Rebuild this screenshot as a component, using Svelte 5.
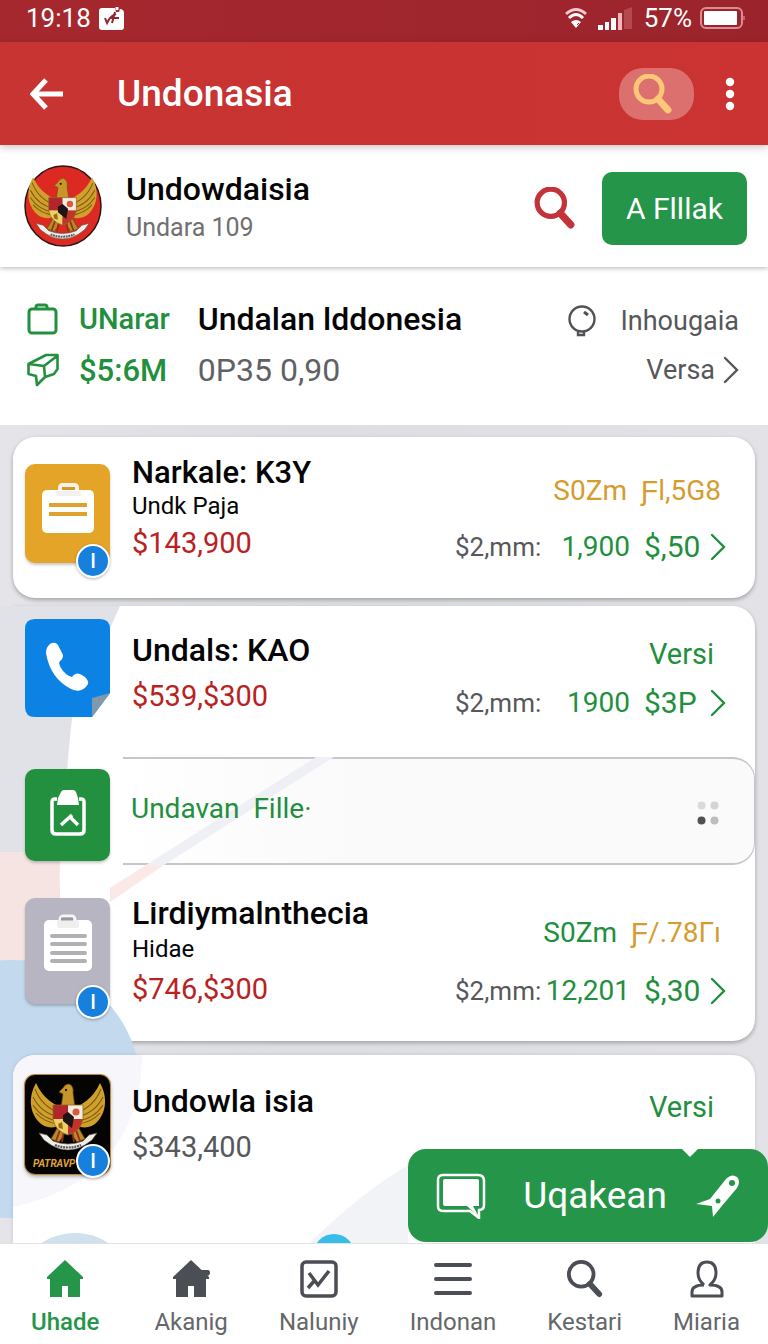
<script>
  const rows = [
    { kind: 'first', icon: 'case', badge: true, title: 'Narkale: K3Y', sub: 'Undk Paja', price: '$143,900', tone: 'red',
      top: [{ text: 'S0Zm', tone: 'gold' }, { text: 'Ƒl,5G8', tone: 'gold' }], count: '1,900', amount: '$,50' },
    { kind: 'call', icon: 'phone', title: 'Undals: KAO', price: '$539,$300', tone: 'red',
      top: [{ text: 'Versi', tone: 'green' }], count: '1900', amount: '$3P' },
    { kind: 'tall', icon: 'notes', badge: true, title: 'Lirdiymalnthecia', sub: 'Hidae', price: '$746,$300', tone: 'red',
      top: [{ text: 'S0Zm', tone: 'green' }, { text: 'Ƒ/.78Γı', tone: 'gold' }], count: '12,201', amount: '$,30' },
    { kind: 'last', icon: 'crest', badge: true, title: 'Undowla isia', price: '$343,400', tone: 'grey',
      top: [{ text: 'Versi', tone: 'green' }] }
  ];
  const tabs = [
    { id: 'home', label: 'Uhade' },
    { id: 'house', label: 'Akanig' },
    { id: 'chart', label: 'Naluniy' },
    { id: 'menu', label: 'Indonan' },
    { id: 'search', label: 'Kestari' },
    { id: 'person', label: 'Miaria' }
  ];
  let active = $state('home');
</script>

{#snippet lens(size, color, width)}
  <svg width={size} height={size} viewBox="0 0 40 40" fill="none" stroke={color} stroke-width={width} aria-hidden="true">
    <circle cx="16" cy="15" r="13" />
    <path d="M25 25 L35 36" stroke-width={width + 2} stroke-linecap="round" />
  </svg>
{/snippet}

{#snippet chevron()}
  <svg class="chev" width="16" height="28" viewBox="0 0 16 28" fill="none" stroke="currentColor" stroke-width="2.400" stroke-linecap="round" aria-hidden="true">
    <path d="M2 2 L14 14 L2 26" />
  </svg>
{/snippet}

{#snippet garuda()}
  <g>
    <path d="M39 34 C30 30 18 24 11 8 C3 22 5 37 13 46 C20 54 30 54 36 49 Z" fill="#d0a02c" />
    <path d="M47 34 C56 30 68 24 75 8 C83 22 81 37 73 46 C66 54 56 54 50 49 Z" fill="#d0a02c" />
    <path d="M10 14 Q17 32 35 38 M8 22 Q16 38 34 42 M8 30 Q17 44 34 46 M11 38 Q20 48 34 49 M76 14 Q69 32 51 38 M78 22 Q70 38 52 42 M78 30 Q69 44 52 46 M75 38 Q66 48 52 49" fill="none" stroke="#7c5a12" stroke-width="1.100" />
    <path d="M36 33 L38 19 L34 17 L38 13 Q40 9 44 9 Q49 11 48 18 L50 33 Z" fill="#c7952a" stroke="#6f4f10" stroke-width=".7" />
    <circle cx="41" cy="15" r="1.200" fill="#2a1c05" />
    <path d="M34 50 L26 64 L34 67 L43 54 L52 67 L60 64 L52 50 Z" fill="#b98a25" stroke="#6f4f10" stroke-width=".8" />
    <path d="M35 55 L31 66 M39 55 L37 67 M47 55 L49 67 M51 55 L55 66" stroke="#9b2a22" stroke-width="1.800" />
    <path d="M28 30 H43 V44 H28 Z" fill="#b3242b" />
    <path d="M43 30 H58 V44 H43 Z" fill="#f4ece2" />
    <path d="M28 44 H43 V60 Q30 56 28 44 Z" fill="#ecd069" />
    <path d="M43 44 H58 Q56 56 43 60 Z" fill="#c2342b" />
    <path d="M38 40 L43 37 L49 42 L47 53 L43 50 L38 46 Z" fill="#1f1413" />
    <circle cx="51" cy="37" r="3.500" fill="#d95a3a" />
    <path d="M33 49 L37 47 L38 54 L34 53 Z" fill="#9a6b12" />
    <path d="M28 30 H58 V44 Q56 56 43 60 Q30 56 28 44 Z" fill="none" stroke="#8c6a1c" stroke-width=".8" />
    <path d="M14 58 L22 60 L28 66 Q43 72 58 66 L64 60 L72 58 L67 65 L60 70 Q43 80 26 70 L19 65 Z" fill="#efefea" stroke="#5c5145" stroke-width=".7" />
    <path d="M30 70 Q43 75 56 70" fill="none" stroke="#555" stroke-width="2.200" stroke-dasharray="2 .8" />
  </g>
{/snippet}

{#snippet row(r)}
  <article class="row {r.kind}">
    <div class="thumb {r.icon}">
      {#if r.icon === 'case'}
        <svg width="52" height="52" viewBox="0 0 52 52" aria-hidden="true">
          <path d="M18 9 V6 Q18 3 21 3 H32 Q35 3 35 6 V9" fill="none" stroke="#f5f2ec" stroke-width="4" />
          <rect x="0" y="8" width="52" height="43" rx="5" fill="#fff" />
          <path d="M14 9 H39 V12 Q39 14 36 14 H17 Q14 14 14 12 Z" fill="#f3f1ee" />
          <path d="M20 5 H33 V8 H20 Z" fill="#d39a2b" />
          <path d="M7 23 H45 M7 32 H45" stroke="#e0a22e" stroke-width="4" />
        </svg>
      {:else if r.icon === 'phone'}
        <svg width="85" height="98" viewBox="0 0 85 98" aria-hidden="true">
          <path d="M10 0 H75 Q85 0 85 10 V74 L67 98 H10 Q0 98 0 88 V10 Q0 0 10 0 Z" fill="#0b82e4" />
          <path d="M85 74 L67 79 V98 Z" fill="#7f98ab" />
          <path d="M25 25 Q30 22 33 26 L38 36 Q38 40 35 42 Q33 44 36 49 Q40 56 47 58 Q51 52 57 56 Q64 60 63 65 Q57 75 46 70 Q25 59 21 34 Q21 28 25 25 Z" fill="#fff" />
        </svg>
      {:else if r.icon === 'notes'}
        <svg width="50" height="58" viewBox="0 0 50 58" aria-hidden="true">
          <path d="M17 10 V6 Q17 2 21 2 H28 Q32 2 32 6 V10" fill="none" stroke="#f6f6f7" stroke-width="3" />
          <rect x="1" y="6" width="48" height="51" rx="5" fill="#fff" />
          <rect x="14" y="6" width="22" height="8" rx="2" fill="#efeff0" />
          <path d="M18 5 H30" stroke="#98989c" stroke-width="3" />
          <path d="M9 22 H42 M9 30 H42 M9 39 H42 M9 47 H42" stroke="#b1b0b4" stroke-width="4" stroke-linecap="round" />
        </svg>
      {:else}
        <svg width="86" height="99" viewBox="0 0 86 99" aria-hidden="true">
          {@render garuda()}
        </svg>
        <span class="crest-name">PATRAVP</span>
      {/if}
      {#if r.badge}<span class="badge">I</span>{/if}
    </div>
    <div class="info">
      <h2>{r.title}</h2>
      {#if r.sub}<p class="sub">{r.sub}</p>{/if}
      <p class="price {r.tone}">{r.price}</p>
    </div>
    <div class="stats">
      <p class="top">
        {#each r.top as part}<span class={part.tone}>{part.text}</span>{/each}
      </p>
      {#if r.count}
        <a class="figures" href="#details">
          <span class="unit">$2,mm:</span>
          <span class="count">{r.count}</span>
          <span class="amount">{r.amount}</span>
          {@render chevron()}
        </a>
      {/if}
    </div>
  </article>
{/snippet}

<div class="page">
  <div class="status">
    <span>19:18</span>
    <svg width="25" height="25" viewBox="0 0 25 25" aria-hidden="true">
      <path d="M3 2 H16 L17 6 H20 L21 3 H22 Q25 4 25 7 V21 Q25 24 22 24 H3 Q0 24 0 21 V5 Q0 2 3 2 Z" fill="#fff" />
      <path d="M18 1 V4" stroke="#fff" stroke-width="3" />
      <path d="M6 12 L8 17 Q11 10 17 8 M16 6 L13 17 M12 12 H20" fill="none" stroke="#8f2830" stroke-width="2" />
    </svg>
    <span class="space"></span>
    <svg width="24" height="22" viewBox="0 0 24 22" fill="none" aria-hidden="true">
      <path d="M2 7 Q12 -2 22 7" stroke="#f1c9cc" stroke-width="3" />
      <path d="M5 11 Q12 4 19 11" stroke="#fff" stroke-width="3" />
      <path d="M7 15 Q12 11 17 15 L12 21 Z" fill="#fff" />
      <path d="M13 18 L15 16" stroke="#9d262e" />
    </svg>
    <svg class="signal" width="34" height="23" viewBox="0 0 34 23" aria-hidden="true">
      <path d="M0 18 H5 V23 H0 Z M7 15 H11 V23 H7 Z M13 11 H18 V23 H13 Z" fill="#fff" />
      <path d="M20 6 H24 V23 H20 Z" fill="#f0b9bd" />
      <path d="M26 3 L34 0 V22 H26 Z" fill="#b4484f" />
    </svg>
    <span class="percent">57%</span>
    <svg class="battery" width="46" height="22" viewBox="0 0 46 22" aria-hidden="true">
      <rect x="1" y="1" width="41" height="20" rx="5" fill="none" stroke="#d98c91" stroke-width="2" />
      <rect x="4" y="4" width="33" height="14" rx="1" fill="#fff" />
      <path d="M44 9 V13" stroke="#c4646a" stroke-width="2" />
    </svg>
  </div>

  <header class="appbar">
    <button class="plain" aria-label="Back">
      <svg width="34" height="32" viewBox="0 0 34 32" fill="none" stroke="#fff" stroke-width="5" aria-hidden="true">
        <path d="M16 2 L3 16 L16 30 M3 16 H33" />
      </svg>
    </button>
    <h1>Undonasia</h1>
    <button class="pill" aria-label="Search">{@render lens(40, '#fcc776', 5)}</button>
    <button class="plain" aria-label="More">
      <svg width="10" height="34" viewBox="0 0 10 34" fill="#fff" aria-hidden="true">
        <circle cx="5" cy="5" r="4.200" /><circle cx="5" cy="17" r="4.200" /><circle cx="5" cy="29" r="4.200" />
      </svg>
    </button>
  </header>

  <section class="profile">
    <svg width="78" height="82" viewBox="0 0 78 82" aria-hidden="true">
      <ellipse cx="39" cy="41" rx="38" ry="40" fill="#dc2a22" stroke="#2b1512" stroke-width="1.500" />
      <g transform="translate(-1 5) scale(.92)">{@render garuda()}</g>
    </svg>
    <div class="who">
      <h2>Undowdaisia</h2>
      <p>Undara 109</p>
    </div>
    <button class="plain" aria-label="Find">{@render lens(42, '#c3333a', 5)}</button>
    <button class="cta">A Flllak</button>
  </section>

  <section class="summary">
    <svg width="32" height="32" viewBox="0 0 32 32" fill="none" stroke="#23903f" stroke-width="3" aria-hidden="true">
      <rect x="2" y="6" width="27" height="24" rx="3" />
      <path d="M9 6 V4 Q9 2 11 2 H18 Q20 2 20 4 V6" />
    </svg>
    <strong class="green">UNarar</strong>
    <h2>Undalan lddonesia</h2>
    <p class="hint">
      <svg width="28" height="34" viewBox="0 0 28 34" fill="none" stroke="#505255" stroke-width="2.400" aria-hidden="true">
        <circle cx="14" cy="15" r="12.500" />
        <path d="M10 28 V31 H16 V28" />
        <path d="M16 8 L20 11" stroke-width="3" />
      </svg>
      Inhougaia
    </p>
    <svg width="32" height="34" viewBox="0 0 32 34" fill="none" stroke="#23903f" stroke-width="2.600" stroke-linejoin="round" aria-hidden="true">
      <path d="M1.500 11 L19 2 H30.500 V16 L27 21 L18 24 L10 32 L9 23 L1.500 21 Z M1.500 11 L17 13 L30 3 M17 13 L18 24" />
    </svg>
    <strong class="green big">$5:6M</strong>
    <p class="code">0P35 0,90</p>
    <a class="hint link" href="#versa">Versa {@render chevron()}</a>
  </section>

  <main>
    <section class="card">{@render row(rows[0])}</section>

    <section class="group">
      <svg class="backdrop" width="142" height="638" viewBox="0 0 142 638" aria-hidden="true">
        <path d="M0 0 H120 Q94 58 73 105 Q66 160 62 246 H0 Z" fill="#e1e2e7" />
        <path d="M0 246 H60 Q58 300 66 360 H0 Z" fill="#f6e4e2" />
        <circle cx="12" cy="483" r="129" fill="#c3d9ee" />
      </svg>
      <div class="upper">{@render row(rows[1])}</div>
      <div class="filler">
        <svg class="stripe" width="250" height="160" viewBox="0 0 250 160" aria-hidden="true">
          <path d="M206 0 H224 L54 108 H36 Z" fill="#efeff6" />
          <path d="M36 108 H54 L0 145 V131 Z" fill="#fae9e7" />
        </svg>
        <div class="thumb clip">
          <svg width="36" height="46" viewBox="0 0 36 46" fill="none" stroke="#fff" stroke-width="3.500" aria-hidden="true">
            <path d="M7 9 H5 Q2 9 2 12 V40 Q2 44 6 44 H30 Q34 44 34 40 V12 Q34 9 31 9 H29" />
            <path d="M7 15 L8 8 L11 2 Q12 0 14 0 H23 Q25 0 26 2 L28 8 L29 15 Z" fill="#fff" stroke="none" />
            <path d="M11 35 L22 25 M20 27 L28 35" />
          </svg>
        </div>
        <a class="green" href="#filler">Undavan&nbsp; Fille·</a>
        <svg width="22" height="24" viewBox="0 0 22 24" aria-hidden="true">
          <circle cx="4.500" cy="4.500" r="4" fill="#dadada" /><circle cx="17.500" cy="4.500" r="4" fill="#d4d4d4" />
          <circle cx="4.500" cy="19.500" r="4" fill="#505050" /><circle cx="17.500" cy="19.500" r="4" fill="#bdbdbd" />
        </svg>
      </div>
      <div class="lower">{@render row(rows[2])}</div>
    </section>

    <section class="card open">
      <svg class="tint" width="395" height="188" viewBox="0 0 395 188" aria-hidden="true">
        <path d="M0 0 H129 Q130 60 90 108 Q55 140 0 152 Z" fill="#f7f7fb" />
        <path d="M297 188 Q345 140 395 110 V188 Z" fill="#f2f3f7" />
        <circle cx="62" cy="238" r="60" fill="#cfe0ee" />
        <circle cx="321" cy="200" r="21" fill="#38bde6" />
      </svg>
      {@render row(rows[3])}
    </section>

    <button class="fab">
      <svg width="50" height="46" viewBox="0 0 50 46" aria-hidden="true">
        <path d="M7 2 H42 Q48 2 48 8 V32 Q48 37 43 37 V45 L34 38 H7 Q2 38 2 33 V7 Q2 2 7 2 Z" fill="none" stroke="#fff" stroke-width="2.500" />
        <path d="M9 6 H41 Q43 6 43 8 V33 H37 L43 44 L31 33 H9 Q7 33 7 31 V8 Q7 6 9 6 Z" fill="#fff" />
      </svg>
      <span>Uqakean</span>
      <svg width="44" height="42" viewBox="0 0 44 42" aria-hidden="true">
        <path d="M0 29 L14 24 L30 4 Q36 -2 41 2 Q45 6 41 13 L25 32 L17 42 L16 31 Z" fill="#fff" />
        <circle cx="36" cy="8" r="3" fill="#259549" /><circle cx="22" cy="26" r="2.500" fill="#259549" />
      </svg>
    </button>
  </main>

  <nav>
    {#each tabs as tab}
      <button class:active={active === tab.id} onclick={() => (active = tab.id)}>
        {#if tab.id === 'home' || tab.id === 'house'}
          <svg width="38" height="38" viewBox="0 0 38 38" fill="currentColor" aria-hidden="true">
            <path d="M19 0 L37 17 V19 H34 V37 H22 V26 H16 V37 H4 V19 H1 V17 Z" />
            {#if tab.id === 'house'}<path d="M29 10 H36 Q38 10 38 13 Q38 16 34 16 V20 Z" />{/if}
          </svg>
        {:else if tab.id === 'chart'}
          <svg width="38" height="38" viewBox="0 0 38 38" fill="none" stroke="currentColor" stroke-width="3.500" aria-hidden="true">
            <rect x="2" y="2" width="34" height="34" rx="4" />
            <path d="M9 13 L18 25 L29 11 M8 28 L15 20" />
          </svg>
        {:else if tab.id === 'menu'}
          <svg width="40" height="38" viewBox="0 0 40 38" fill="none" stroke="currentColor" stroke-width="4" stroke-linecap="round" aria-hidden="true">
            <path d="M3 5 H37 M3 19 H37 M3 33 H37" />
          </svg>
        {:else if tab.id === 'search'}
          {@render lens(38, 'currentColor', 4)}
        {:else}
          <svg width="34" height="38" viewBox="0 0 34 38" fill="none" stroke="currentColor" stroke-width="3" stroke-linejoin="round" aria-hidden="true">
            <path d="M14 25 Q8 20 8 13 Q8 2 17 2 Q26 2 26 13 Q26 20 20 25 Q32 25 32 32 V36 H2 V32 Q2 25 14 25" />
          </svg>
        {/if}
        <span>{tab.label}</span>
      </button>
    {/each}
  </nav>
</div>

<style>
  :global(body) { background: #fff; }
  .page { display: flex; flex-direction: column; min-height: 100vh; font-family: Roboto, "Liberation Sans", sans-serif; color: #050505; }
  h1, h2, p { margin: 0; }
  h1, h2, strong { font-weight: 500; }
  button { border: 0; padding: 0; font: inherit; cursor: pointer; }
  a { color: inherit; text-decoration: none; }
  svg { display: block; flex: none; }
  .plain { background: none; }
  .green { color: #218f3d; }
  .gold { color: #d59c31; }
  .red { color: #b9221f; }
  .grey { color: #56585b; }

  .status { display: flex; align-items: center; height: 36px; padding: 0 22px 6px 26px; background: linear-gradient(90deg, #a6282f, #9b242c); color: #fff; font-size: 26px; gap: 8px; }
  .status .space { flex: 1; }
  .status .signal { margin-left: 2px; }
  .status .percent { margin-left: 4px; }

  .appbar { position: relative; z-index: 2; display: flex; align-items: center; height: 103px; padding: 0 33px 0 30px; box-sizing: border-box; background: linear-gradient(90deg, #c73432, #ca3331); color: #fff; box-shadow: 0 2px 8px rgba(60, 0, 0, .25); }
  h1 { flex: 1; margin-left: 53px; font-size: 37px; }
  .pill { display: flex; align-items: center; justify-content: center; width: 75px; height: 52px; padding-right: 8px; border-radius: 24px; background: #dc706e; margin-right: 31px; }

  .profile { position: relative; z-index: 1; display: flex; align-items: center; padding: 20px 21px 20px 24px; background: #fff; box-shadow: 0 1px 5px rgba(0, 0, 0, .3); }
  .who { flex: 1; margin: 4px 0 0 24px; }
  .who h2 { font-size: 32px; line-height: 40px; }
  .who p { font-size: 25px; line-height: 38px; color: #707070; }
  .profile .plain { margin-top: 4px; }
  .cta { height: 73px; padding: 0 24px; margin: 4px 0 0 26px; border-radius: 10px; background: #259549; color: #fff; font-size: 30px; }

  .summary { display: grid; grid-template-columns: 32px auto auto 1fr; grid-auto-rows: 40px; row-gap: 11px; align-items: center; padding: 32px 29px 35px 27px; background: #fff; }
  .summary strong { margin-left: 20px; font-size: 29px; }
  .summary .big { font-size: 31px; }
  .summary h2, .code { margin-left: 28px; font-size: 32px; }
  .code { color: #5f6164; }
  .hint { display: flex; align-items: center; justify-content: flex-end; gap: 24px; padding-top: 4px; font-size: 27px; color: #55575a; }
  .link { gap: 8px; padding-top: 0; }

  main { position: relative; flex: 1; display: flex; flex-direction: column; padding: 12px 13px 0; background: linear-gradient(90deg, #e4e4e9, #dcdee2 40%, #e2e2e7); }
  .card { position: relative; border-radius: 22px; background: #fff; box-shadow: 0 2px 4px rgba(0, 0, 0, .28); }
  .card.open { flex: 1; margin-top: 14px; border-radius: 22px 22px 0 0; overflow: hidden; box-shadow: 0 0 4px rgba(0, 0, 0, .12); }
  .group { position: relative; margin-top: 8px; border-radius: 0 22px 22px 0; background: #fff; box-shadow: 0 2px 4px rgba(0, 0, 0, .28); }
  .backdrop { position: absolute; left: -13px; top: 0; }
  .tint { position: absolute; left: 0; bottom: 0; }
  .upper, .lower, .row { position: relative; }

  .row { display: flex; align-items: flex-start; padding: 0 29px 0 12px; }
  .thumb { position: relative; display: flex; align-items: center; justify-content: center; flex: none; width: 85px; height: 99px; border-radius: 10px; box-shadow: 0 2px 3px rgba(0, 0, 0, .22); }
  .case { margin-top: 27px; background: #e3a428; }
  .case svg { margin-bottom: 12px; }
  .phone { margin-top: 12px; box-shadow: none; }
  .notes { margin-top: 33px; height: 106px; background: #b6b5c1; }
  .notes svg { margin-bottom: 16px; }
  .crest { margin-top: 20px; background: #060403; box-shadow: 0 0 0 1px #b88735, 0 2px 4px rgba(0, 0, 0, .4); }
  .crest-name { position: absolute; left: 8px; bottom: 2px; font-size: 10px; line-height: 16px; font-weight: 700; font-style: italic; color: #e0a53c; }
  .badge { position: absolute; right: 0; bottom: -15px; width: 30px; height: 30px; border: 2px solid #fff; border-radius: 50%; background: #1680dc; color: #fff; font-size: 20px; font-weight: 500; line-height: 30px; text-align: center; box-shadow: 0 1px 3px rgba(0, 0, 0, .3); }
  .crest .badge { bottom: -4px; }

  .info { margin-left: 22px; flex: 1; }
  .info h2 { font-size: 32px; line-height: 36px; }
  .first h2 { font-size: 31px; }
  .sub { font-size: 24px; line-height: 30px; }
  .price { font-size: 29px; line-height: 44px; }
  .first .info { padding: 18px 0 33px; }
  .call .info { padding: 26px 0 39px; }
  .tall .info { padding: 30px 0; }
  .last .info { padding-top: 28px; }
  .call .price, .last .price { margin-top: 6px; }
  .tall .sub { line-height: 36px; }

  .stats { display: flex; flex-direction: column; gap: 20px; padding-top: 36px; font-size: 29px; line-height: 36px; }
  .call .stats { gap: 13px; padding-top: 30px; }
  .tall .stats { gap: 22px; padding-top: 50px; }
  .last .stats { padding-top: 34px; }
  .top { display: flex; justify-content: flex-end; gap: 14px; padding-right: 5px; }
  .first .top, .tall .top { font-size: 28px; }
  .call .top, .last .top { padding-right: 12px; }
  .figures { display: grid; grid-template-columns: 84px 91px 80px 16px; align-items: center; color: #218f3d; }
  .unit { font-size: 26px; color: #56585b; }
  .count { font-size: 28px; text-align: right; }
  .amount { padding-left: 14px; font-size: 30px; }

  .filler { position: relative; display: flex; align-items: flex-start; justify-content: space-between; padding: 12px 36px 4px 12px; }
  .filler::before { content: ""; position: absolute; inset: 0 0 0 110px; border: solid #c6c6cc; border-width: 2px 1px 2px 0; border-radius: 0 22px 22px 0; background: linear-gradient(90deg, #fff, #fafafa 35%); box-sizing: border-box; }
  .filler > * { position: relative; }
  .filler .stripe { position: absolute; left: 97px; top: 0; }
  .clip { height: 92px; background: #23903f; }
  .clip svg { margin-bottom: 4px; }
  .filler a { flex: 1; margin-left: 21px; font-size: 28px; line-height: 80px; }
  .filler > svg:last-child { align-self: center; margin-bottom: 4px; }

  .fab { position: absolute; right: 0; bottom: 1px; display: flex; align-items: center; justify-content: space-between; width: 360px; height: 93px; padding: 0 28px; border-radius: 18px; background: #259549; color: #fff; font-size: 37px; }
  .fab span { margin-left: 8px; }
  .fab::before { content: ""; position: absolute; right: 70px; top: 0; border: solid transparent; border-width: 8px 8px 0; border-top-color: #fff; }

  nav { position: sticky; bottom: 0; z-index: 3; display: flex; justify-content: space-between; padding: 16px 28px 6px 31px; background: #fff; border-top: 1px solid #e2e2e5; }
  nav button { display: flex; flex-direction: column; align-items: center; gap: 8px; background: none; color: #4c4e56; font-size: 24px; line-height: 32px; }
  nav button span { color: #65676a; }
  nav .active, nav .active span { color: #259549; }
  nav .active span { font-weight: 500; }
  nav button:first-child { margin-right: 4px; }
</style>
